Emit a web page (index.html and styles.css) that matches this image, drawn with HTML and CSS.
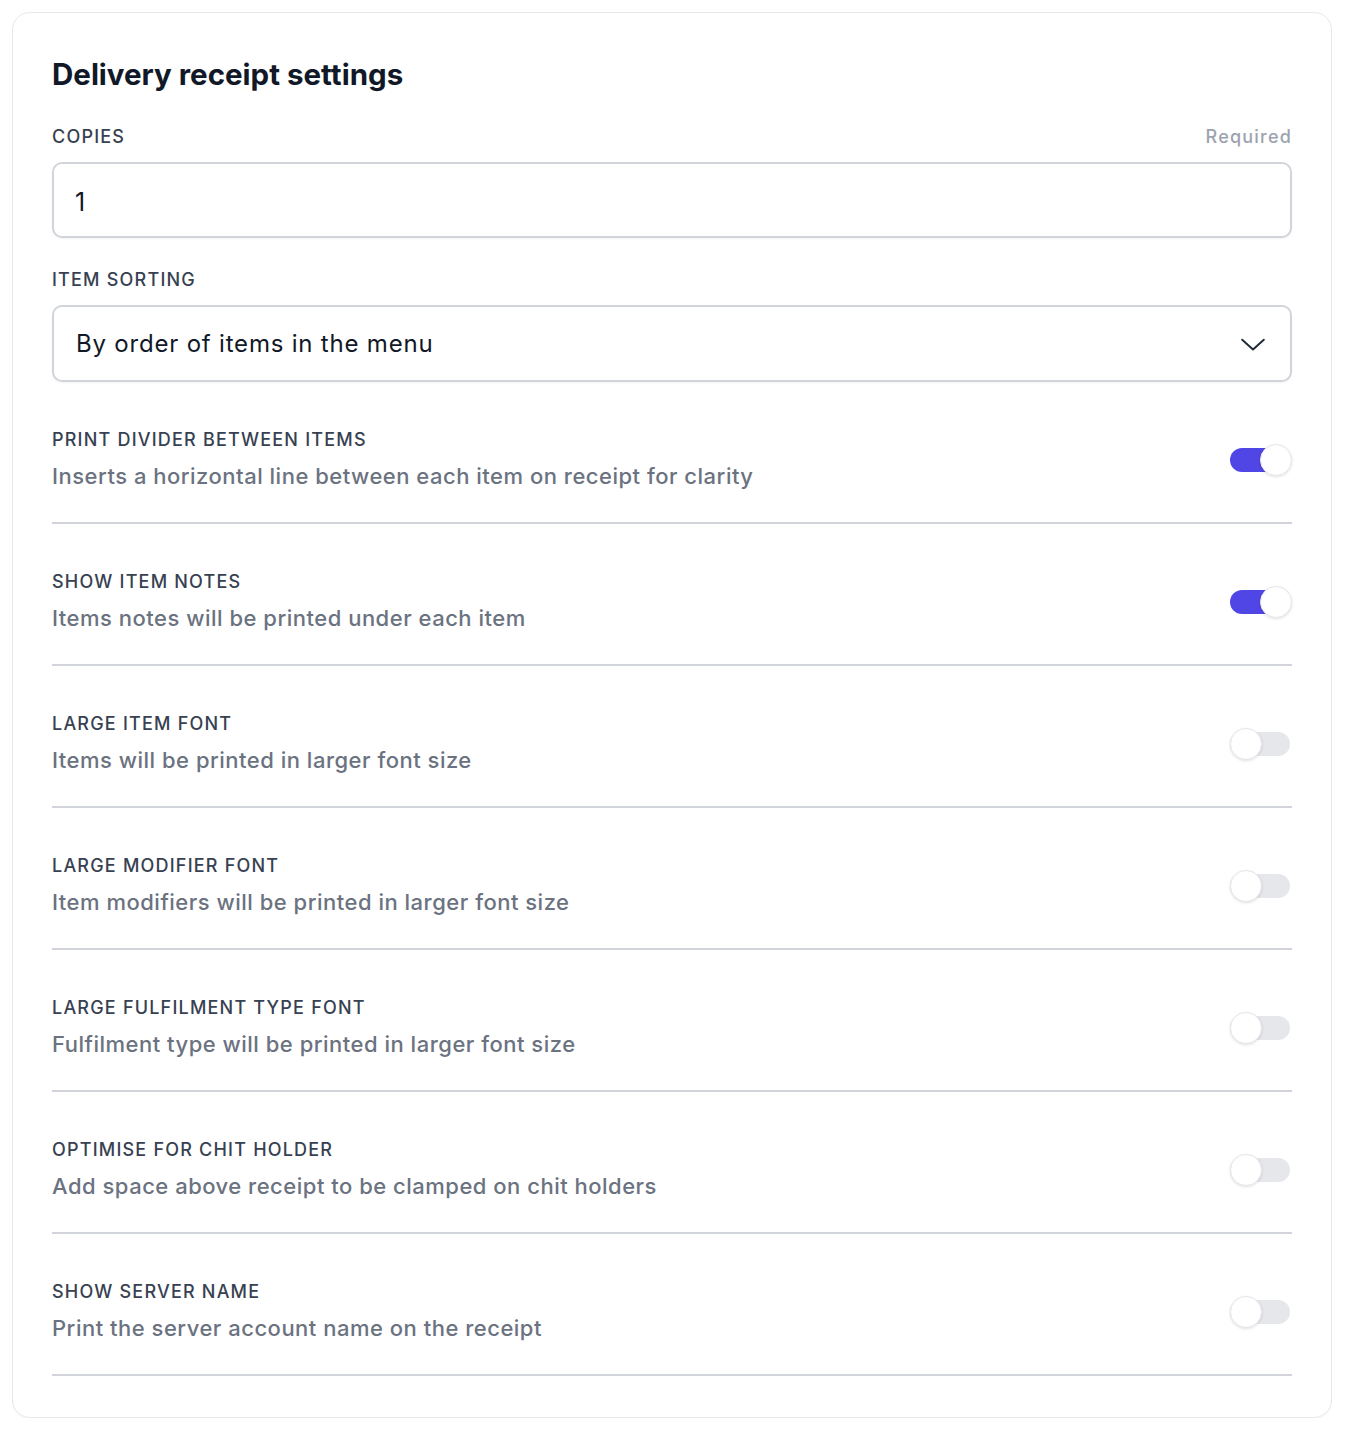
FILE: index.html
```html
<!DOCTYPE html>
<html lang="en">
<head>
  <meta charset="UTF-8">
  <title>Delivery receipt settings</title>
  <link rel="stylesheet" href="styles.css">
</head>
<body>

  <div class="card">
    <h1>Delivery receipt settings</h1>

    <!-- Copies -->
    <div class="field-head">
      <label class="label" for="copies">Copies</label>
      <span class="required">Required</span>
    </div>
    <input class="input" id="copies" type="text" value="1">

    <!-- Item sorting -->
    <div class="field-head sorting">
      <label class="label" for="sorting">Item sorting</label>
    </div>
    <div class="select">
      <span>By order of items in the menu</span>
      <svg width="26" height="26" viewBox="0 0 24 24" fill="none" stroke="#1f2937" stroke-width="1.8" stroke-linecap="round" stroke-linejoin="round">
        <path d="M2 8l10 9 10-9"/>
      </svg>
    </div>

    <!-- Toggles -->
    <div class="row">
      <div class="row-text">
        <div class="label">Print divider between items</div>
        <div class="desc">Inserts a horizontal line between each item on receipt for clarity</div>
      </div>
      <div class="toggle on"><span class="knob"></span></div>
    </div>

    <div class="row">
      <div class="row-text">
        <div class="label">Show item notes</div>
        <div class="desc">Items notes will be printed under each item</div>
      </div>
      <div class="toggle on"><span class="knob"></span></div>
    </div>

    <div class="row">
      <div class="row-text">
        <div class="label">Large item font</div>
        <div class="desc">Items will be printed in larger font size</div>
      </div>
      <div class="toggle"><span class="knob"></span></div>
    </div>

    <div class="row">
      <div class="row-text">
        <div class="label">Large modifier font</div>
        <div class="desc">Item modifiers will be printed in larger font size</div>
      </div>
      <div class="toggle"><span class="knob"></span></div>
    </div>

    <div class="row">
      <div class="row-text">
        <div class="label">Large fulfilment type font</div>
        <div class="desc">Fulfilment type will be printed in larger font size</div>
      </div>
      <div class="toggle"><span class="knob"></span></div>
    </div>

    <div class="row">
      <div class="row-text">
        <div class="label">Optimise for chit holder</div>
        <div class="desc">Add space above receipt to be clamped on chit holders</div>
      </div>
      <div class="toggle"><span class="knob"></span></div>
    </div>

    <div class="row">
      <div class="row-text">
        <div class="label">Show server name</div>
        <div class="desc">Print the server account name on the receipt</div>
      </div>
      <div class="toggle"><span class="knob"></span></div>
    </div>
  </div>

</body>
</html>
```

FILE: styles.css
```css
body {
  margin: 12px 14px 12px 12px;
  background: #ffffff;
  color: #111827;
  font-family: Inter, "Noto Sans", sans-serif;
}

.card {
  border: 1px solid #e5e7eb;
  border-radius: 18px;
  padding: 43px 39px 41px;
  box-shadow: 0 1px 2px rgba(0, 0, 0, 0.04);
}

h1 {
  margin: 0 0 33px;
  font-size: 29.5px;
  line-height: 36px;
  font-weight: 700;
  color: #111827;
  letter-spacing: 0;
}

.field-head {
  display: flex;
  justify-content: space-between;
  align-items: center;
  margin-bottom: 13px;
}

.field-head.sorting {
  margin-top: 30px;
}

.label {
  display: block;
  font-size: 18px;
  line-height: 24px;
  font-weight: 500;
  color: #374151;
  text-transform: uppercase;
  letter-spacing: 1.2px;
}

.required {
  font-size: 18px;
  line-height: 24px;
  font-weight: 500;
  color: #9ca3af;
  letter-spacing: 1.2px;
}

.input {
  display: block;
  box-sizing: border-box;
  width: 100%;
  height: 76px;
  margin: 0;
  padding: 4px 21px 0;
  border: 2px solid #d1d5db;
  border-radius: 10px;
  font-family: inherit;
  font-size: 25px;
  color: #111827;
  outline: none;
  box-shadow: 0 1px 2px rgba(0, 0, 0, 0.05);
}

.select {
  box-sizing: border-box;
  height: 77px;
  padding: 0 24px 0 22px;
  border: 2px solid #d1d5db;
  border-radius: 10px;
  display: flex;
  align-items: center;
  justify-content: space-between;
  font-size: 24px;
  color: #111827;
  letter-spacing: 0.8px;
  box-shadow: 0 1px 2px rgba(0, 0, 0, 0.05);
}

.row {
  display: flex;
  align-items: center;
  justify-content: space-between;
  padding: 46px 0 31px;
  border-bottom: 2px solid #d1d5db;
}

.row-text .label {
  margin-bottom: 9px;
}

.desc {
  font-size: 22px;
  line-height: 30px;
  color: #6b7280;
  font-weight: 500;
  letter-spacing: 0.5px;
}

.toggle {
  position: relative;
  width: 60px;
  height: 24px;
  margin-right: 2px;
  border-radius: 12px;
  background: #e5e7eb;
  flex-shrink: 0;
}

.toggle.on {
  background: #4f46e5;
}

.knob {
  position: absolute;
  top: -4px;
  left: 0;
  width: 30px;
  height: 30px;
  border-radius: 50%;
  background: #ffffff;
  border: 1px solid #e5e7eb;
  box-shadow: 0 1px 3px rgba(0, 0, 0, 0.12);
}

.toggle.on .knob {
  left: 30px;
}
```
